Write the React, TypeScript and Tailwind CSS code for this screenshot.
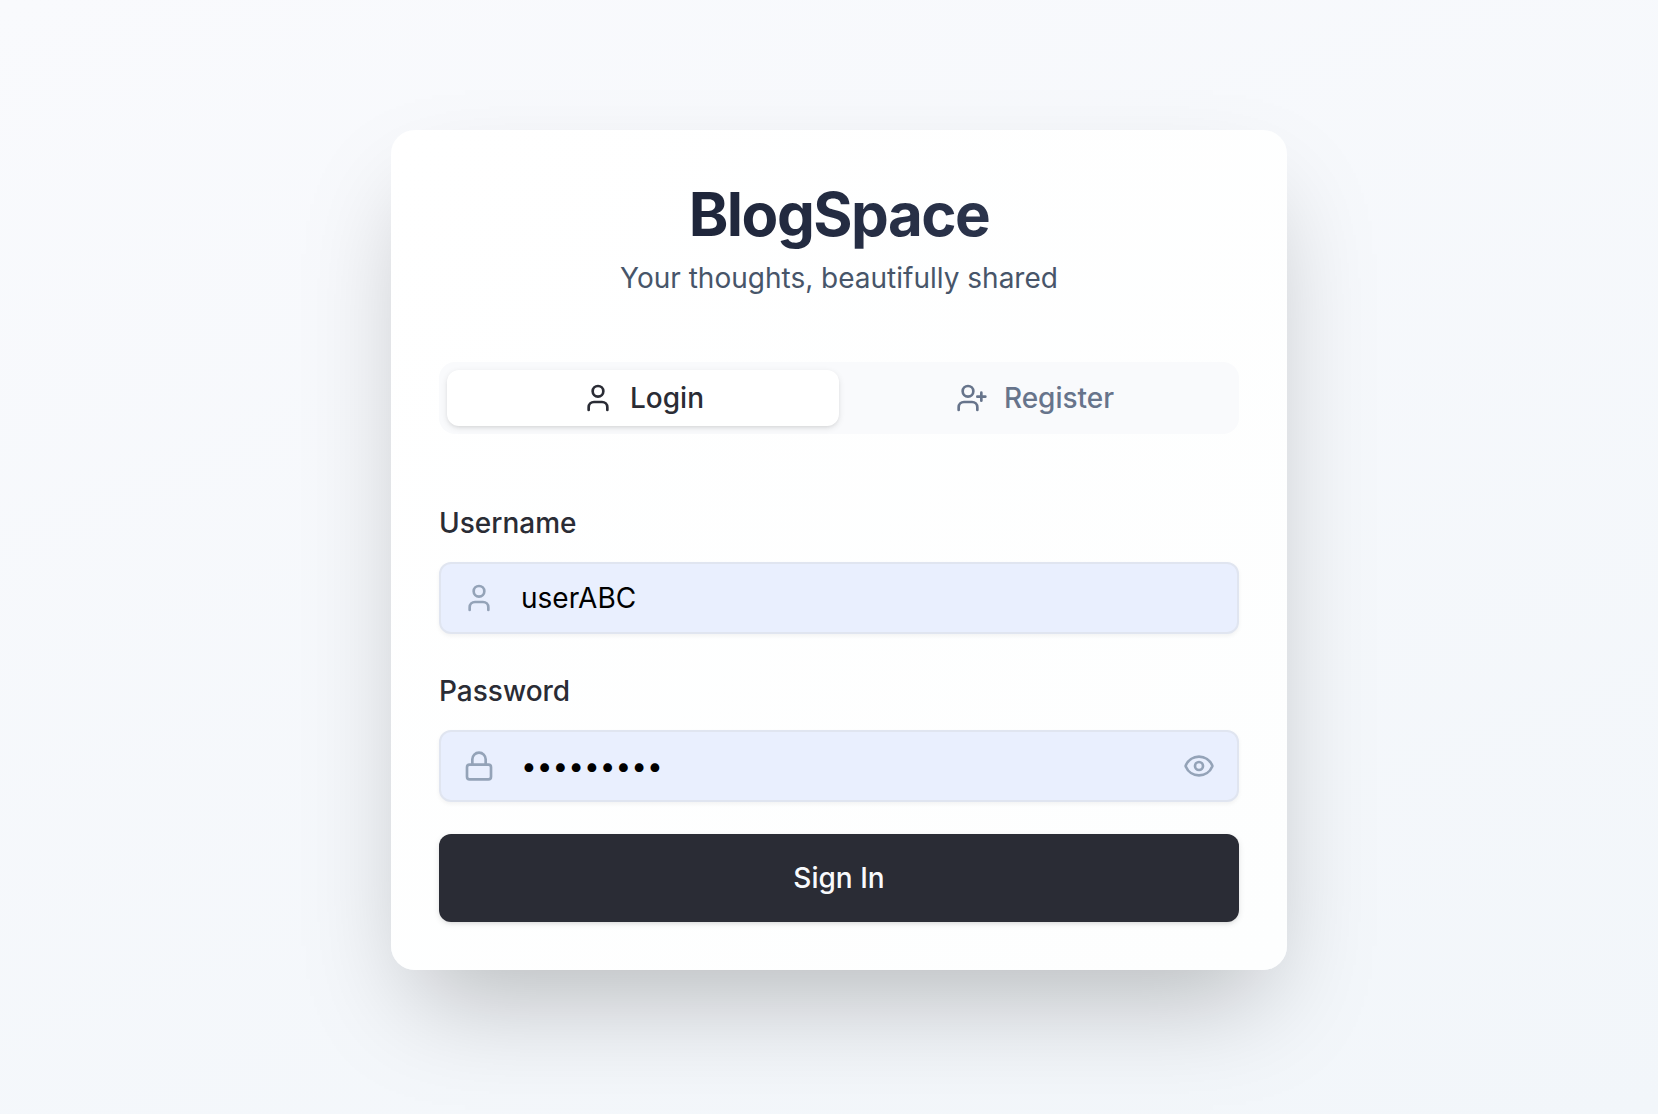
import React from "react";
import { Eye, Lock, User, UserPlus } from "lucide-react";

type FieldProps = {
  label: string;
  icon: React.ReactNode;
  children: React.ReactNode;
  trailing?: React.ReactNode;
};

function Field({ label, icon, children, trailing }: FieldProps) {
  return (
    <div className="flex flex-col gap-4">
      <label className="h-12 text-[28px] leading-[50px] font-medium text-[#2a2c35]">{label}</label>
      <div className="flex h-[72px] items-center rounded-xl border-2 border-[#e0e5f0] bg-[#e9effe] px-[22px] shadow-[0_2px_4px_rgba(0,0,0,0.05)]">
        <span className="text-[#94a3b8]">{icon}</span>
        <span className="ml-[26px] flex-1 text-[28px] leading-10 text-black">{children}</span>
        {trailing}
      </div>
    </div>
  );
}

export default function App() {
  return (
    <main className="flex h-[1114px] w-full justify-center bg-[linear-gradient(160deg,#f9fafd,#f2f6fa)] pt-[130px] pl-5 font-['Inter',sans-serif]">
      <section className="h-[840px] w-[896px] rounded-3xl bg-gradient-to-br from-white to-[#fdfefe] p-12 shadow-[0_50px_100px_-24px_rgba(0,0,0,0.25)]">
        <header className="flex flex-col gap-2 text-center">
          <h1 className="bg-gradient-to-r from-[#141a2c] to-[#36405a] bg-clip-text text-[60px] leading-[72px] font-bold tracking-[-0.025em] text-transparent">
            BlogSpace
          </h1>
          <p className="text-[28px] leading-10 text-[#475569]">Your thoughts, beautifully shared</p>
        </header>

        <nav className="mt-16 grid h-[72px] grid-cols-2 rounded-2xl bg-[#f9fafc] p-2 text-[28px] leading-10 font-medium">
          <button className="flex items-center justify-center gap-4 rounded-xl bg-white text-[#2a2c35] shadow-[0_2px_6px_rgba(0,0,0,0.1),0_2px_4px_-2px_rgba(0,0,0,0.1)]">
            <User size={32} />
            Login
          </button>
          <button className="flex items-center justify-center gap-4 rounded-xl text-[#67748b]">
            <UserPlus size={32} />
            Register
          </button>
        </nav>

        <form className="mt-16 flex flex-col gap-8">
          <Field label="Username" icon={<User size={32} />}>
            userABC
          </Field>
          <Field
            label="Password"
            icon={<Lock size={32} />}
            trailing={<Eye size={32} className="text-[#94a3b8]" />}
          >
            •••••••••
          </Field>
          <button
            type="button"
            className="h-[88px] rounded-xl bg-[#2a2c35] text-[28px] leading-10 font-medium text-[#f8fafc] shadow-[0_2px_6px_rgba(0,0,0,0.1),0_2px_4px_-2px_rgba(0,0,0,0.1)]"
          >
            Sign In
          </button>
        </form>
      </section>
    </main>
  );
}
